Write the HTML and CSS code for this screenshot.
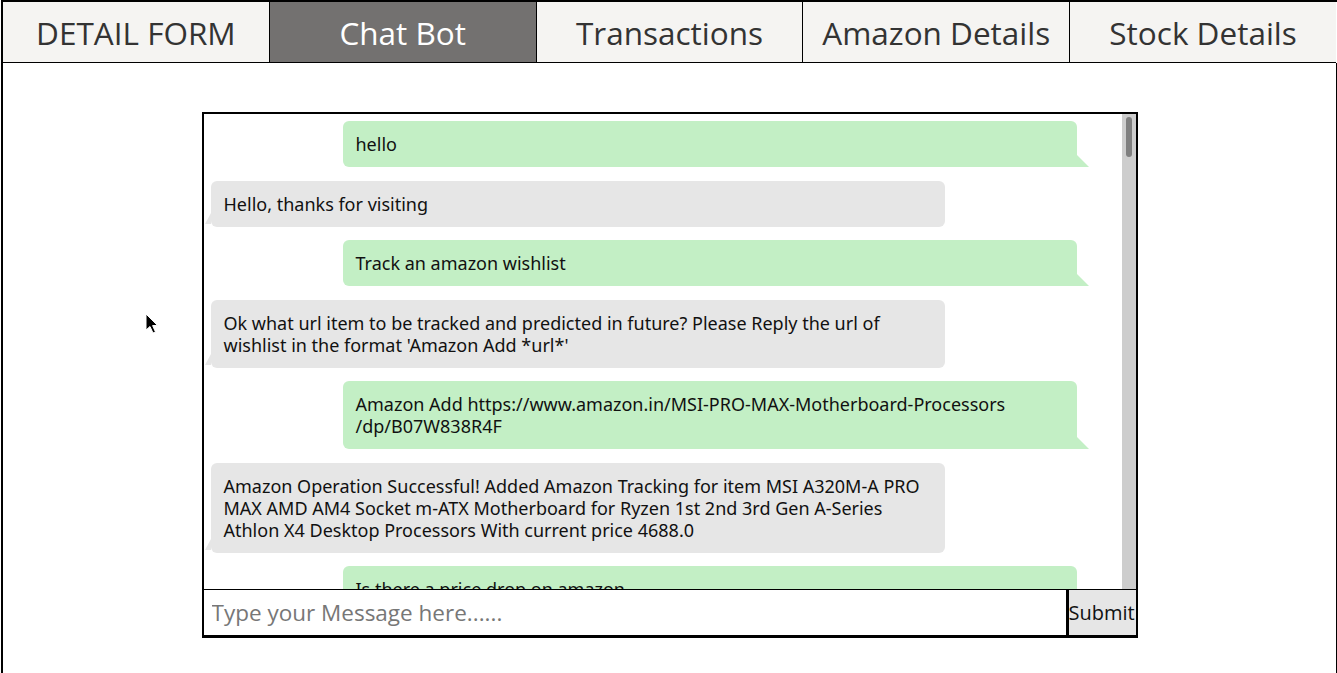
FILE: index.html
```html
<!DOCTYPE html>
<html>
<head>
<meta charset="utf-8">
<link rel="stylesheet" href="styles.css">
</head>
<body>
<div class="app">
  <nav class="tabs">
    <div class="tab">DETAIL FORM</div>
    <div class="tab active">Chat Bot</div>
    <div class="tab">Transactions</div>
    <div class="tab">Amazon Details</div>
    <div class="tab">Stock Details</div>
  </nav>
  <main class="content">
    <section class="chat">
      <div class="chat-body">
        <div class="messages">
          <div class="msg user">hello</div>
          <div class="msg bot">Hello, thanks for visiting</div>
          <div class="msg user">Track an amazon wishlist</div>
          <div class="msg bot">Ok what url item to be tracked and predicted in future? Please Reply the url of wishlist in the format 'Amazon Add *url*'</div>
          <div class="msg user">Amazon Add https://www.amazon.in/MSI-PRO-MAX-Motherboard-Processors<wbr>/dp/B07W838R4F</div>
          <div class="msg bot">Amazon Operation Successful! Added Amazon Tracking for item MSI A320M-A PRO MAX AMD AM4 Socket m-ATX Motherboard for Ryzen 1st 2nd 3rd Gen A-Series Athlon X4 Desktop Processors With current price 4688.0</div>
          <div class="msg user">Is there a price drop on amazon</div>
        </div>
        <div class="scrollbar"><div class="thumb"></div></div>
      </div>
      <form class="composer">
        <input class="field" type="text" placeholder="Type your Message here......">
        <button class="send" type="button">Submit</button>
      </form>
    </section>
  </main>
  <svg class="cursor" width="14" height="22" viewBox="0 0 14 22">
    <path d="M1 1 L1 17 L5 13.5 L8 20 L10.5 19 L7.6 12.6 L12.5 12.4 Z" fill="#000" stroke="#fff" stroke-width="1"/>
  </svg>
</div>
</body>
</html>
```
FILE: styles.css
```css
* { box-sizing: border-box; }
html, body { margin: 0; padding: 0; background: #fff; }
body { padding-left: 1px; overflow: hidden; }
.app {
  position: relative;
  border-left: 2px solid #000;
  border-top: 2px solid #000;
  min-height: 700px;
  font-family: "Open Sans", sans-serif;
}
.tabs {
  display: flex;
  height: 61px;
  border-bottom: 1px solid #000;
  margin-right: 1px;
}
.tab {
  flex: 1;
  display: flex;
  align-items: center;
  justify-content: center;
  background: #f5f4f2;
  color: #333;
  font-size: 31.5px;
  border-left: 1px solid #000;
  padding-top: 1px;
}
.tab:first-child { border-left: none; }
.tab.active { background: #737170; color: #fff; }
.content {
  border-right: 1px solid #000;
  min-height: 640px;
  padding-top: 49px;
}
.chat {
  width: 936px;
  height: 526px;
  margin: 0 auto;
  border: 2px solid #000;
  border-bottom-width: 3px;
  display: flex;
  flex-direction: column;
}
.chat-body {
  flex: 1;
  min-height: 0;
  display: flex;
}
.messages {
  flex: 1;
  min-width: 0;
  overflow: hidden;
  padding: 7px 0 0;
  font-family: "Noto Sans", sans-serif;
  font-size: 18px;
  line-height: 22px;
  color: #111;
}
.scrollbar {
  width: 14px;
  background: #cdcdcd;
  padding: 3px 4px 0 4px;
}
.thumb {
  height: 40px;
  background: #7f7f7f;
  border-radius: 3px;
}
.msg {
  position: relative;
  width: 80%;
  padding: 12px 13px;
  border-radius: 6px;
  margin-bottom: 13.5px;
}
.msg.user {
  background: #c3efc5;
  margin-left: 139px;
  border-bottom-right-radius: 0;
}
.msg.user::after {
  content: "";
  position: absolute;
  right: -12px;
  bottom: 0;
  border-left: 12px solid #c3efc5;
  border-top: 12px solid transparent;
}
.msg.bot {
  background: #e6e6e6;
  margin-left: 7px;
}
.msg.bot::before {
  content: "";
  position: absolute;
  left: -6px;
  bottom: 3px;
  border-right: 6px solid #e6e6e6;
  border-top: 11px solid transparent;
}
.composer {
  display: flex;
  height: 46px;
  margin: 0;
  border-top: 1px solid #000;
}
.field {
  flex: 1;
  min-width: 0;
  border: none;
  outline: none;
  padding: 0 8px;
  font-family: "Open Sans", sans-serif;
  font-size: 22.5px;
  color: #333;
  background: #fff;
}
.field::placeholder { color: #777; }
.send {
  width: 70px;
  border: none;
  border-left: 3px solid #000;
  background: #e6e6e6;
  font-family: "Open Sans", sans-serif;
  font-size: 20px;
  color: #111;
  padding: 0;
  text-align: left;
  overflow: hidden;
  white-space: nowrap;
}
.cursor {
  position: absolute;
  left: 142px;
  top: 311px;
}
```
